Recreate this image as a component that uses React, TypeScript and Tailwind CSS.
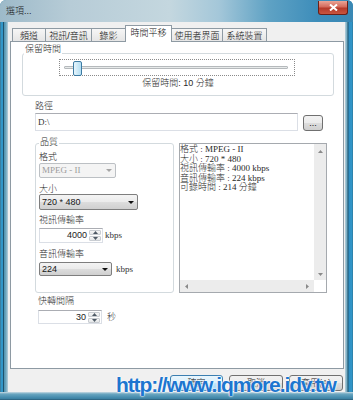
import React from "react";

const SANS = "[font-family:'Liberation_Sans','Noto_Sans_CJK_TC',sans-serif]";
const SERIF = "[font-family:'Liberation_Serif','Noto_Sans_CJK_TC',serif]";

type Dir = "up" | "down" | "left" | "right";

function Tri({ dir, color = "#000", w = 7, h = 4 }: { dir: Dir; color?: string; w?: number; h?: number }) {
  const vw = dir === "left" || dir === "right" ? h : w;
  const vh = dir === "left" || dir === "right" ? w : h;
  let pts = "";
  if (dir === "down") pts = `0,0 ${vw},0 ${vw / 2},${vh}`;
  if (dir === "up") pts = `0,${vh} ${vw},${vh} ${vw / 2},0`;
  if (dir === "left") pts = `${vw},0 ${vw},${vh} 0,${vh / 2}`;
  if (dir === "right") pts = `0,0 0,${vh} ${vw},${vh / 2}`;
  return (
    <svg width={vw} height={vh} viewBox={`0 0 ${vw} ${vh}`} className="block shrink-0">
      <polygon points={pts} fill={color} />
    </svg>
  );
}

function Label({ children, className = "" }: { children: React.ReactNode; className?: string }) {
  return <div className={`h-[10px] whitespace-nowrap text-[9px] leading-[10px] text-[#2a2a2a] ${className}`}>{children}</div>;
}

function Combo({ text, className = "", disabled = false }: { text: string; className?: string; disabled?: boolean }) {
  return (
    <div
      className={`flex shrink-0 items-center justify-between rounded-[2px] border pl-[2px] pr-[3px] text-[9px] leading-none ${
        disabled
          ? `border-[#bcc0c4] bg-[#f4f4f4] text-[#9b9b9b] ${SERIF}`
          : "border-[#7e7e7e] bg-[linear-gradient(#f4f4f4_0%,#ebebeb_50%,#dddddd_51%,#cfcfcf_100%)] text-[#151515]"
      } ${className}`}
    >
      <span>{text}</span>
      <Tri dir="down" color={disabled ? "#a5a5a5" : "#111"} w={6} h={3} />
    </div>
  );
}

function Spin({ value, className = "" }: { value: string; className?: string }) {
  return (
    <div className={`flex shrink-0 border border-[#dbdfe6] border-t-[#abadb3] bg-white ${className}`}>
      <div className="flex flex-1 items-center justify-end pr-[2px] text-[9px] leading-none text-[#222]">{value}</div>
      <div className="my-[1px] mr-[1px] flex w-[12px] flex-col gap-px">
        <div className="flex flex-1 items-center justify-center rounded-[1px] border border-[#c9cdd2] bg-[linear-gradient(#f7f7f7,#e4e6e8)]">
          <Tri dir="up" color="#4f5a66" w={5} h={3} />
        </div>
        <div className="flex flex-1 items-center justify-center rounded-[1px] border border-[#c9cdd2] bg-[linear-gradient(#f7f7f7,#e4e6e8)]">
          <Tri dir="down" color="#4f5a66" w={5} h={3} />
        </div>
      </div>
    </div>
  );
}

function Btn({ children, def = false, className = "" }: { children: React.ReactNode; def?: boolean; className?: string }) {
  return (
    <div
      className={`flex items-start justify-center rounded-[3px] border pt-[2px] text-[9px] leading-[10px] text-[#111] ${
        def
          ? "border-[#3c7fb1] bg-[linear-gradient(#eaf6fd_0%,#d9f0fc_50%,#bee6fd_51%,#a7d9f5_100%)]"
          : "border-[#707070] bg-[linear-gradient(#f2f2f2_0%,#ebebeb_50%,#dddddd_51%,#cfcfcf_100%)]"
      } ${className}`}
    >
      {children}
    </div>
  );
}

const tabs: { t: string; w: string; sel?: boolean }[] = [
  { t: "頻道", w: "w-[34px]" },
  { t: "視訊/音訊", w: "w-[47px]" },
  { t: "錄影", w: "w-[35px]" },
  { t: "時間平移", w: "w-[47px]", sel: true },
  { t: "使用者界面", w: "w-[52px]" },
  { t: "系統裝置", w: "w-[45px]" },
];

export default function App() {
  return (
    <div className={`relative flex h-[400px] w-[353px] flex-col overflow-hidden rounded-t-[6px] bg-[#3f8db3] font-light ${SANS}`}>
      {/* title bar */}
      <div className="flex h-[22px] shrink-0 items-start justify-between bg-[linear-gradient(90deg,#9dbac9_0%,#b7ccd7_20%,#c4d7df_48%,#a4c7d9_62%,#5fa2c4_76%,#3d8dba_90%,#3a88b4_100%)] pl-[6px] pr-[5px]">
        <div className="mt-[6px] text-[9px] leading-[10px] text-[#1b1b1b]">選項...</div>
        <div className="mt-[1px] flex h-[14px] w-[30px] items-center justify-center rounded-b-[3px] border border-t-0 border-[#6b1f17] bg-[linear-gradient(#eaa597_0%,#d46a5b_45%,#b53a2a_55%,#c9563f_100%)]">
          <svg width="9" height="7" viewBox="0 0 9 7">
            <path d="M1 0.5 L8 6.5 M8 0.5 L1 6.5" stroke="#fff" strokeWidth="2" />
          </svg>
        </div>
      </div>

      <div className="flex h-[370px] shrink-0">
        <div className="w-[8px] bg-[linear-gradient(90deg,#3a7fa0_0px,#3a7fa0_1px,#3196c8_1px,#3196c8_3px,#1f526c_3px,#1f526c_4px,#4d92b0_4px,#6fa8c0_6px,#b9d0db_8px)]" />

        {/* client */}
        <div className="flex w-[337px] flex-col bg-[#f0f0f0]">
          {/* tabs */}
          <div className="-mb-px ml-[4px] mt-[3px] flex h-[17px] items-end">
            {tabs.map((tb, i) => (
              <div
                key={tb.t}
                className={`${tb.w} ${i > 0 ? "-ml-px" : ""} flex shrink-0 justify-center whitespace-nowrap border border-b-0 border-[#8e9aa3] text-[9px] text-[#111] ${
                  tb.sel
                    ? "relative z-10 h-[17px] bg-white pt-[2px] leading-[10px]"
                    : "h-[14px] bg-[linear-gradient(#f6f6f6,#e4e4e4)] pt-[2px] leading-[10px]"
                }`}
              >
                {tb.t}
              </div>
            ))}
          </div>

          {/* panel */}
          <div className="ml-[2px] flex h-[328px] w-[334px] flex-col border border-[#8e9aa3] bg-white pl-[11px] text-[#2a2a2a]">
            {/* 保留時間 group */}
            <div className="relative mt-[11px] h-[43px] w-[312px] shrink-0 rounded-[3px] border border-[#d3dade]">
              <div className="absolute -top-[10px] left-[1px] bg-white px-[1px] text-[9px] leading-[11px]">保留時間</div>
              <div className="relative ml-[36px] mt-[5px] flex h-[17px] w-[236px] items-center border border-dotted border-[#8a8a8a] pl-[4px] pr-[6px]">
                <div className="h-[3px] w-full rounded-[1px] border border-[#b5b9bc] bg-[#e7eaea]" />
                <div className="absolute left-[13px] top-[1px] h-[15px] w-[9px] rounded-[2px] border border-[#3d7ba3] bg-[linear-gradient(90deg,#e6f5fc,#b3def3)]" />
              </div>
              <div className="mt-[2px] text-center text-[9px] leading-[10px]">保留時間: 10 分鐘</div>
            </div>

            {/* 路徑 */}
            <Label className="ml-[13px] mt-[5px]">路徑</Label>
            <div className="ml-[13px] mt-[2px] flex items-start">
              <div className={`flex h-[18px] w-[263px] items-center border border-[#dbdfe6] border-t-[#abadb3] pl-[2px] text-[9px] leading-none text-[#333] ${SERIF}`}>
                D:\
              </div>
              <Btn className="ml-[5px] mt-[2px] h-[16px] w-[20px]">...</Btn>
            </div>

            {/* row 2 */}
            <div className="ml-[13px] mt-[12px] flex gap-[5px]">
              {/* 品質 group */}
              <div className="relative flex h-[150px] w-[139px] flex-col rounded-[3px] border border-[#d3dade] pl-[3px]">
                <div className="absolute -top-[7px] left-[3px] bg-white px-[1px] text-[9px] leading-[11px]">品質</div>
                <Label className="mt-[8px]">格式</Label>
                <Combo text="MPEG - II" disabled className="mt-[1px] h-[15px] w-[77px]" />
                <Label className="mt-[6px]">大小</Label>
                <Combo text="720 * 480" className="h-[16px] w-[99px]" />
                <Label className="mt-[5px]">視訊傳輸率</Label>
                <div className="mt-[3px] flex items-center">
                  <Spin value="4000" className="h-[15px] w-[64px]" />
                  <span className={`ml-[2px] text-[9px] leading-none text-[#333] ${SERIF}`}>kbps</span>
                </div>
                <Label className="mt-[6px]">音訊傳輸率</Label>
                <div className="mt-[3px] flex items-center">
                  <Combo text="224" className="h-[14px] w-[73px]" />
                  <span className={`ml-[4px] text-[9px] leading-none text-[#333] ${SERIF}`}>kbps</span>
                </div>
              </div>

              {/* info box */}
              <div className="flex h-[150px] w-[148px] flex-col border border-[#a5a9ae] bg-white">
                <div className="flex min-h-0 flex-1">
                  <div className={`flex-1 pt-[1px] text-[9px] leading-[9.5px] text-[#2a2a2a] ${SERIF}`}>
                    <div>格式 : MPEG - II</div>
                    <div>大小 : 720 * 480</div>
                    <div>視訊傳輸率 : 4000 kbps</div>
                    <div>音訊傳輸率 : 224 kbps</div>
                    <div>可錄時間 : 214 分鐘</div>
                  </div>
                  <div className="flex w-[12px] flex-col items-center justify-between bg-[#ececec] pb-[4px] pt-[6px]">
                    <Tri dir="up" color="#8a8a8a" w={5} h={3} />
                    <Tri dir="down" color="#8a8a8a" w={5} h={3} />
                  </div>
                </div>
                <div className="flex h-[12px]">
                  <div className="flex flex-1 items-center justify-between bg-[#ececec] px-[5px]">
                    <Tri dir="left" color="#8a8a8a" w={5} h={3} />
                    <Tri dir="right" color="#8a8a8a" w={5} h={3} />
                  </div>
                  <div className="w-[12px] bg-white" />
                </div>
              </div>
            </div>

            {/* 快轉間隔 */}
            <Label className="ml-[16px] mt-[3px]">快轉間隔</Label>
            <div className="ml-[16px] mt-[4px] flex items-center">
              <Spin value="30" className="h-[14px] w-[64px]" />
              <span className="ml-[5px] text-[9px] leading-none">秒</span>
            </div>
          </div>

          {/* buttons */}
          <div className="mt-[6px] flex justify-end gap-[6px] pr-[2px]">
            <Btn def className="h-[16px] w-[53px]">確定</Btn>
            <Btn className="h-[16px] w-[54px]">取消</Btn>
            <Btn className="h-[16px] w-[54px]">套用(A)</Btn>
          </div>
        </div>

        <div className="w-[8px] bg-[linear-gradient(90deg,#b9d0db_0px,#6fa8c0_2px,#1f526c_3px,#2f8fc4_4px,#3196c8_7px,#2b6f90_8px)]" />
      </div>

      <div className="h-[8px] shrink-0 bg-[linear-gradient(#c9dbe3_0px,#6aa6c0_2px,#4a8fb0_5px,#3b7fa0_7px,#24506a_8px)]" />

      {/* watermark */}
      <div className="absolute left-[116px] top-[374px] whitespace-nowrap text-[21px] font-bold leading-[21px] tracking-[-1.1px] text-[#1d76cf] [font-family:'Liberation_Sans',sans-serif] [text-shadow:0_0_2px_#fff,0_0_2px_#fff,0_0_1px_#fff]">
        http://www.iqmore.idv.tw
      </div>
    </div>
  );
}
